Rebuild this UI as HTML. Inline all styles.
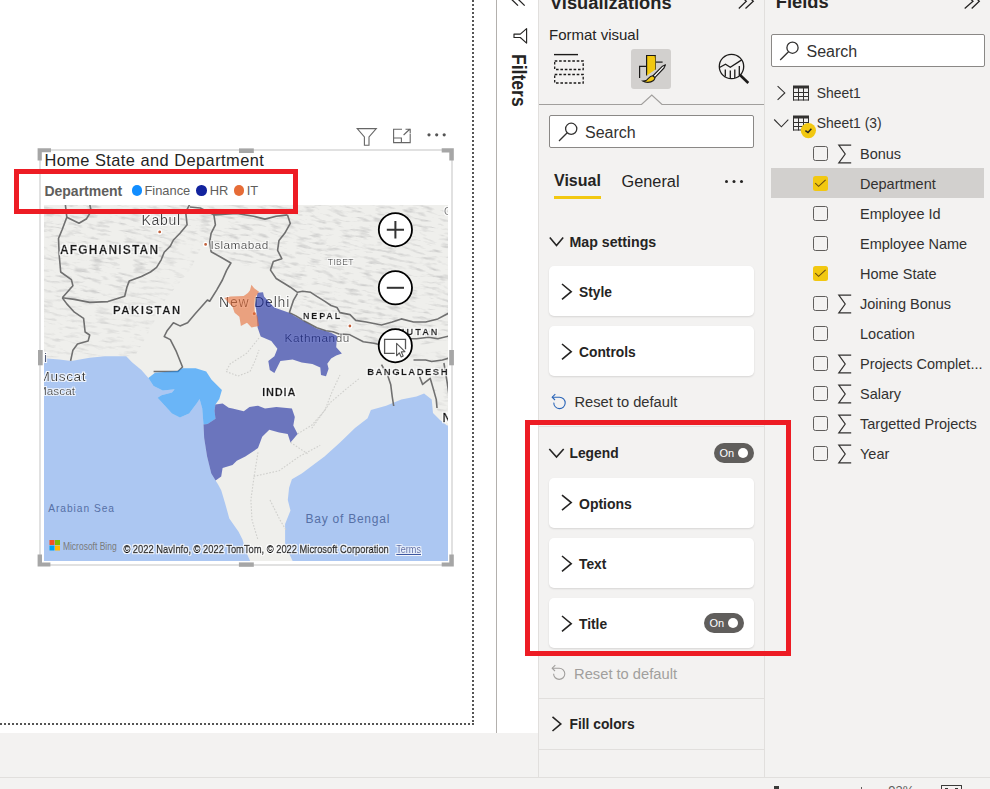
<!DOCTYPE html>
<html><head><meta charset="utf-8">
<style>
*{margin:0;padding:0;box-sizing:border-box}
html,body{width:990px;height:789px;overflow:hidden;background:#fff;font-family:"Liberation Sans",sans-serif;color:#252423}
.a{position:absolute}
.t{position:absolute;white-space:nowrap;line-height:1}
.card{position:absolute;left:549px;width:205px;height:50px;background:#fff;border-radius:5px;box-shadow:0 1px 2px rgba(0,0,0,0.12)}
.chev{position:absolute}
.cb{position:absolute;left:813px;width:15px;height:15px;border:1px solid #605e5c;border-radius:2px;background:#fff}
.fl{position:absolute;left:860px;font-size:14.5px;color:#323130;white-space:nowrap;line-height:1}
.sig{position:absolute;left:838px}
</style></head><body>

<!-- canvas area -->
<div class="a" style="left:0;top:0;width:496px;height:733px;background:#fff"></div>
<!-- dotted page border -->
<div class="a" style="left:0;top:723px;width:474px;height:2px;background-image:linear-gradient(90deg,#555 50%,transparent 50%);background-size:4px 2px"></div>
<div class="a" style="left:472px;top:0;width:2px;height:725px;background-image:linear-gradient(180deg,#555 50%,transparent 50%);background-size:2px 4px"></div>
<!-- bottom grey -->
<div class="a" style="left:0;top:733px;width:990px;height:56px;background:#f3f2f1"></div>
<div class="a" style="left:0;top:777px;width:990px;height:1px;background:#e1dfdd"></div>

<!-- VISUAL START -->
<svg class="a" style="left:350px;top:122px" width="105" height="30" viewBox="350 122 105 30">
 <path d="M357.2,128.6 H376.3 L369,137 V145.3 H364.4 V137 Z" fill="none" stroke="#666" stroke-width="1.1" stroke-linejoin="miter"/>
 <path d="M402,129.2 H393.6 V142.6 H410.2 V134" fill="none" stroke="#666" stroke-width="1.1"/>
 <path d="M393.6,138 H401.4 V142.6" fill="none" stroke="#666" stroke-width="1.1"/>
 <path d="M403.6,135 L410,129 M405.5,129.2 H410.2 V133.6" fill="none" stroke="#666" stroke-width="1.1"/>
 <circle cx="429" cy="134.8" r="1.6" fill="#555"/><circle cx="436.7" cy="134.8" r="1.6" fill="#555"/><circle cx="444.2" cy="134.8" r="1.6" fill="#555"/>
</svg>
<div class="a" style="left:38.8px;top:149px;width:414.4px;height:417px;border:2px solid #e1e1e1"></div>
<svg class="a" style="left:36px;top:146px" width="420" height="424" viewBox="36 146 420 424">
 <g fill="#a6a6a6">
  <path d="M37.6,148.3 H51 V152.3 H41.8 V160.6 H37.6 Z"/>
  <path d="M441.7,148.3 H453.8 V160.6 H449.3 V152.6 H441.7 Z"/>
  <path d="M37.6,554.4 H42 V562.4 H50.4 V566.6 H37.6 Z"/>
  <path d="M449.3,554.4 H453.8 V566.6 H441.7 V562.4 H449.3 Z"/>
  <rect x="239" y="148.4" width="14.8" height="4.6"/>
  <rect x="238.9" y="562.4" width="14.9" height="4.4"/>
  <rect x="38" y="350" width="4.7" height="15.3"/>
  <rect x="449.2" y="350" width="4.7" height="15.3"/>
 </g>
</svg>
<div class="t" style="left:44.4px;top:151.6px;font-size:16.4px;color:#252423;letter-spacing:0.45px">Home State and Department</div>
<div class="t" style="left:44.4px;top:184.1px;font-size:14px;font-weight:bold;color:#605e5c">Department</div>
<div class="a" style="left:131.7px;top:185.2px;width:10.5px;height:10.5px;border-radius:50%;background:#118dff"></div>
<div class="t" style="left:144.4px;top:185px;font-size:12.9px;color:#605e5c">Finance</div>
<div class="a" style="left:196.4px;top:185.2px;width:10.5px;height:10.5px;border-radius:50%;background:#12239e"></div>
<div class="t" style="left:209.8px;top:185px;font-size:12.9px;color:#605e5c">HR</div>
<div class="a" style="left:233.6px;top:185.2px;width:10.5px;height:10.5px;border-radius:50%;background:#e66c37"></div>
<div class="t" style="left:246.7px;top:185px;font-size:12.9px;color:#605e5c">IT</div>
<svg class="a" style="left:44px;top:205px" width="404" height="356" viewBox="44 205 404 356">
<defs><filter id="hs" x="0" y="0" width="1" height="1" filterUnits="objectBoundingBox"><feTurbulence type="fractalNoise" baseFrequency="0.07 0.32" numOctaves="3" seed="11"/><feColorMatrix values="0 0 0 0 0.5  0 0 0 0 0.5  0 0 0 0 0.5  3.2 0 0 0 -1.6"/></filter>
<filter id="halo"><feMorphology operator="dilate" radius="1" in="SourceAlpha" result="d"/><feFlood flood-color="#fff" flood-opacity="0.85"/><feComposite in2="d" operator="in" result="w"/><feMerge><feMergeNode in="w"/><feMergeNode in="SourceGraphic"/></feMerge></filter></defs>
<rect x="44" y="205" width="404" height="356" fill="#efefec"/>
<clipPath id="c1"><path d="M44.0,205.0 L449.0,205.0 L449.0,313.0 L437.8,318.9 L401.3,318.9 L381.5,325.0 L355.7,320.4 L345.0,314.3 L325.2,302.2 L304.5,289.9 L287.5,285.6 L270.5,270.1 L230.9,263.0 L211.1,251.7 L209.7,241.8 L190.0,232.0 L173.0,246.0 L160.0,262.0 L141.0,276.5 L125.0,296.0 L90.0,302.0 L62.0,298.0 L44.0,290.0 Z"/><path d="M298.8,292.7 L345.0,314.3 L381.5,325.0 L401.3,318.9 L449.0,313.0 L449.0,340.0 L420.0,345.0 L380.0,344.8 L337.0,331.0 L303.0,318.0 L292.0,305.0 Z"/></clipPath>
<clipPath id="c2"><path d="M44.0,290.0 L62.0,298.0 L90.0,302.0 L125.0,296.0 L141.0,276.5 L160.0,262.0 L173.0,246.0 L190.0,232.0 L205.0,240.0 L190.0,270.0 L165.0,300.0 L150.0,330.0 L135.0,356.0 L44.0,357.8 Z"/><path d="M405.0,355.0 L449.0,350.0 L449.0,420.0 L437.0,410.0 L430.0,378.0 L420.0,372.0 Z"/></clipPath>
<g clip-path="url(#c1)" opacity="0.62"><rect x="-100" y="100" width="700" height="600" filter="url(#hs)" transform="rotate(10 246 383)"/></g>
<g clip-path="url(#c2)" opacity="0.42"><rect x="-100" y="100" width="700" height="600" filter="url(#hs)" transform="rotate(10 246 383)"/></g>
<path d="M40.0,357.8 L59.2,359.4 L71.4,360.9 L89.7,357.8 L104.9,356.3 L126.2,356.3 L132.3,362.4 L141.4,370.0 L148.4,378.1 L153.6,386.0 L162.8,390.6 L174.6,389.2 L172.0,392.5 L161.5,395.2 L157.6,397.8 L172.0,413.5 L179.9,417.5 L189.1,413.5 L197.0,403.0 L199.6,399.1 L202.2,408.3 L203.5,424.5 L204.2,438.2 L207.1,456.6 L211.3,473.5 L215.6,480.6 L218.4,484.9 L221.3,490.6 L225.3,503.9 L229.3,518.5 L238.6,531.8 L242.6,539.8 L246.6,553.1 L250.6,562.0 L40.0,562.0 Z" fill="#acc7f2"/>
<path d="M293.1,562.0 L285.1,545.0 L285.1,523.9 L290.5,510.6 L287.8,500.0 L289.1,487.7 L291.9,479.2 L301.8,473.5 L313.1,465.1 L324.5,456.6 L340.0,442.4 L355.0,428.0 L367.6,418.2 L370.9,410.0 L386.1,405.7 L401.3,399.6 L416.5,396.5 L424.1,393.5 L431.7,399.6 L433.0,413.0 L440.0,420.0 L447.0,425.4 L450.0,426.0 L450.0,562.0 Z" fill="#acc7f2"/>
<g fill="none" stroke="#707070" stroke-width="1.6" stroke-linejoin="round">
<path d="M66.8,217.2 L79.0,223.3 L86.6,218.7 L91.2,211.1 L89.7,204.0"/>
<path d="M65.3,204.0 L66.8,217.2 L62.3,229.3 L58.5,238.5 L59.2,255.2 L60.7,272.0 L71.4,279.6 L72.9,285.7 L62.3,297.8"/>
<path d="M62.3,297.8 L74.4,299.4 L89.7,302.4 L107.9,301.6 L124.7,296.3 L126.9,287.2 L129.2,281.1 L141.4,276.5 L150.5,272.0 L156.6,267.4 L161.2,259.8 L164.2,252.2 L170.3,246.1 L173.4,240.0 L180.0,233.3 L187.1,224.8 L185.7,212.1 L189.9,204.0"/>
<path d="M62.3,297.8 L66.8,303.9 L74.4,312.2 L83.6,318.3 L85.1,332.0 L89.7,335.0 L88.1,341.1 L77.5,344.1 L72.9,350.2 L70.6,360.9"/>
<path d="M213.9,214.9 L215.4,224.8 L211.1,233.3 L209.7,241.8 L211.1,251.7 L221.0,257.3 L230.9,263.0 L226.7,270.1 L222.4,280.0 L216.8,289.9 L209.7,301.2 L207.4,300.0 L195.2,313.7 L187.6,322.8 L180.0,325.9 L173.4,322.8 L167.3,330.4 L164.2,336.5 L170.3,339.6 L176.4,351.7 L182.5,367.0 L177.9,371.5 L153.6,371.5"/>
<path d="M189.9,207.0 L200.3,208.0 L213.9,214.9 L236.6,213.5 L253.5,216.3 L264.9,219.1 L276.2,216.3 L287.5,214.9"/>
<path d="M287.5,214.9 L290.3,223.4 L284.7,233.3 L279.0,240.4 L277.6,250.3 L281.8,258.7 L273.3,261.6 L270.5,270.1 L276.2,278.5 L282.3,282.2 L290.4,287.2 L297.5,292.3 L302.6,291.3 L310.7,292.3 L316.8,296.4 L324.9,301.4 L331.0,305.5 L337.0,307.5 L340.0,312.6 L350.0,314.6 L355.7,320.4 L366.3,322.0 L381.5,325.0 L392.2,322.0 L401.3,318.9 L413.5,322.0 L425.7,322.0 L437.8,318.9 L449.0,313.0"/>
<path d="M297.5,293.3 L293.4,300.4 L291.4,306.5 L289.4,312.6 L295.5,315.6 L305.6,321.7 L316.8,327.8 L325.9,330.8 L333.0,331.8 L339.0,333.9 L350.0,334.9 L363.3,341.7 L373.9,343.3 L380.0,344.8"/>
<path d="M404.4,338.7 L416.5,338.7 L428.7,337.2 L437.8,338.7 L449.0,336.0"/>
<path d="M413.5,360.0 L425.7,360.0 L431.7,361.5 L442.4,360.0 L449.0,358.0"/>
<path d="M381.5,364.6 L387.6,375.2 L390.7,384.4 L392.2,396.5 L393.7,406.0"/>
<path d="M419.6,376.7 L422.6,384.4 L430.2,378.3 L433.3,388.9 L436.3,399.6 L437.0,408.0"/>
<path d="M443.9,363.0 L447.0,381.3 L449.0,395.0"/>
</g>
<g fill="none" stroke="#cfcfcc" stroke-width="1.1" stroke-dasharray="1.6 1.6">
<path d="M258.0,452.3 L253.7,479.2 L250.9,500.0 L252.0,520.0 L258.0,540.0"/>
<path d="M253.7,476.4 L279.2,470.7 L299.0,456.6 L320.2,445.3"/>
<path d="M290.5,442.4 L307.5,453.7"/>
<path d="M311.7,428.3 L330.1,402.8 L345.0,390.0 L360.0,378.0"/>
<path d="M259.0,338.0 L247.0,353.0 L230.0,364.0 L226.0,371.5 L238.0,376.0 L250.0,371.5 L255.0,361.0 L259.0,350.0"/>
<path d="M297.6,433.9 L312.0,425.0 L325.0,410.0 L332.0,392.0 L340.0,375.0"/>
<path d="M270.0,500.0 L280.0,520.0 L286.0,530.0"/>
</g>
<g fill="#c0603a" stroke="#fff" stroke-width="1.2"><circle cx="159.7" cy="231.9" r="2"/><circle cx="205.6" cy="244.4" r="2"/><circle cx="254.2" cy="313.7" r="2"/><circle cx="349.9" cy="326" r="2"/></g>
<text x="141.5" y="224.6" textLength="38.7" lengthAdjust="spacing" style="font-family:'Liberation Sans',sans-serif;font-size:14px;" fill="#404040" filter="url(#halo)">Kabul</text>
<text x="60" y="254" textLength="98.1" lengthAdjust="spacing" style="font-family:'Liberation Sans',sans-serif;font-size:12px;font-weight:bold;stroke:#1a1a1a;stroke-width:0.35px;" fill="#1a1a1a" filter="url(#halo)">AFGHANISTAN</text>
<text x="210.6" y="248.5" textLength="57.6" lengthAdjust="spacing" style="font-family:'Liberation Sans',sans-serif;font-size:11.8px;" fill="#404040" filter="url(#halo)">Islamabad</text>
<text x="327.8" y="265" textLength="25.7" lengthAdjust="spacing" style="font-family:'Liberation Sans',sans-serif;font-size:8.6px;" fill="#555" filter="url(#halo)">TIBET</text>
<text x="113" y="313.5" textLength="67.2" lengthAdjust="spacing" style="font-family:'Liberation Sans',sans-serif;font-size:11.4px;font-weight:bold;stroke:#1a1a1a;stroke-width:0.35px;" fill="#1a1a1a" filter="url(#halo)">PAKISTAN</text>
<text x="219" y="307.2" textLength="70.3" lengthAdjust="spacing" style="font-family:'Liberation Sans',sans-serif;font-size:14px;" fill="#454545" filter="url(#halo)">New Delhi</text>
<text x="303" y="318.7" textLength="37.2" lengthAdjust="spacing" style="font-family:'Liberation Sans',sans-serif;font-size:9px;font-weight:bold;stroke:#1a1a1a;stroke-width:0.35px;" fill="#1a1a1a" filter="url(#halo)">NEPAL</text>
<text x="284.5" y="341.8" textLength="64.9" lengthAdjust="spacing" style="font-family:'Liberation Sans',sans-serif;font-size:11.8px;" fill="#454545" filter="url(#halo)">Kathmandu</text>
<text x="389" y="335.2" textLength="48.5" lengthAdjust="spacing" style="font-family:'Liberation Sans',sans-serif;font-size:9.2px;font-weight:bold;stroke:#1a1a1a;stroke-width:0.35px;" fill="#1a1a1a" filter="url(#halo)">BHUTAN</text>
<text x="367.2" y="375.1" textLength="80.3" lengthAdjust="spacing" style="font-family:'Liberation Sans',sans-serif;font-size:9.5px;font-weight:bold;stroke:#1a1a1a;stroke-width:0.35px;" fill="#1a1a1a" filter="url(#halo)">BANGLADESH</text>
<text x="262.2" y="396" textLength="33.2" lengthAdjust="spacing" style="font-family:'Liberation Sans',sans-serif;font-size:11px;font-weight:bold;stroke:#1a1a1a;stroke-width:0.35px;" fill="#1a1a1a" filter="url(#halo)">INDIA</text>
<text x="38.5" y="381.4" textLength="47.1" lengthAdjust="spacing" style="font-family:'Liberation Sans',sans-serif;font-size:13.6px;" fill="#3a3a3a" filter="url(#halo)">Muscat</text>
<text x="37" y="394.7" textLength="38" lengthAdjust="spacingAndGlyphs" style="font-family:'Liberation Sans',sans-serif;font-size:11.8px;" fill="#3a3a3a" filter="url(#halo)">Mascat</text>
<text x="44.3" y="362.3" style="font-family:'Liberation Sans',sans-serif;font-size:12px;" fill="#3d4a6a" filter="url(#halo)">i</text>
<text x="442.5" y="422" style="font-family:'Liberation Sans',sans-serif;font-size:12px;font-weight:bold;stroke:#1a1a1a;stroke-width:0.35px;" fill="#1a1a1a" filter="url(#halo)">N</text>
<text x="444" y="215" style="font-family:'Liberation Sans',sans-serif;font-size:10px;" fill="#666" filter="url(#halo)">C</text>
<text x="48.2" y="512.2" textLength="65.8" lengthAdjust="spacing" style="font-family:'Liberation Sans',sans-serif;font-size:10.2px;" fill="#5670a6">Arabian Sea</text>
<text x="305.5" y="523" textLength="83.8" lengthAdjust="spacing" style="font-family:'Liberation Sans',sans-serif;font-size:12px;" fill="#5670a6">Bay of Bengal</text>
<g fill-opacity="0.6">
<path d="M148.4,378.1 L155.0,372.8 L177.3,370.9 L182.5,368.2 L195.7,368.2 L206.2,371.5 L211.4,379.4 L221.9,389.9 L219.3,399.1 L215.4,404.5 L214.5,410.7 L215.5,418.8 L207.5,424.0 L203.5,424.5 L202.2,408.3 L199.6,399.1 L197.0,403.0 L189.1,413.5 L179.9,417.5 L172.0,413.5 L157.6,397.8 L161.5,395.2 L172.0,392.5 L174.6,389.2 L162.8,390.6 L153.6,386.0 Z" fill="#118dff"/>
<path d="M215.4,404.5 L222.6,403.6 L228.7,407.7 L232.5,408.5 L243.8,411.3 L249.5,407.1 L258.0,405.7 L265.0,408.5 L276.4,407.1 L291.9,408.5 L294.8,417.0 L293.3,425.5 L297.6,433.9 L290.5,442.4 L287.7,433.9 L279.2,432.5 L269.3,429.7 L262.2,436.8 L258.0,448.1 L245.3,456.6 L236.8,460.8 L232.5,465.1 L222.6,467.9 L221.2,476.4 L215.6,480.6 L211.3,473.5 L207.1,456.6 L204.2,438.2 L203.5,424.5 L207.5,424.0 L215.5,418.8 L214.5,410.7 Z" fill="#12239e"/>
<path d="M257.6,292.7 L263.0,292.3 L264.0,296.5 L274.2,307.5 L288.4,312.6 L302.6,320.7 L316.8,328.8 L331.0,332.8 L337.0,335.9 L336.2,347.2 L341.9,353.5 L336.2,355.4 L331.1,358.6 L327.3,363.7 L328.6,368.7 L326.0,376.3 L321.0,375.0 L320.3,367.5 L312.4,363.9 L301.7,362.4 L292.6,359.4 L280.4,360.9 L274.4,373.0 L269.8,370.0 L268.3,360.9 L274.4,356.3 L277.4,348.7 L271.3,341.1 L260.7,336.5 L257.6,327.4 L256.1,309.1 L255.0,305.3 Z" fill="#12239e"/>
<path d="M251.4,284.8 L254.2,288.2 L259.0,291.7 L254.9,298.0 L254.6,304.3 L254.6,310.7 L257.6,316.7 L259.1,325.9 L251.5,327.4 L247.0,322.8 L240.9,325.9 L239.4,316.7 L234.6,312.7 L232.6,307.1 L224.2,298.0 L230.5,296.6 L243.7,295.9 L247.9,293.1 L250.0,290.3 Z" fill="#e66c37"/>
</g>
<g stroke="#000" stroke-width="1.8" fill="#fff"><circle cx="395.4" cy="229.7" r="16.6"/><circle cx="395.4" cy="287.8" r="16.6"/><circle cx="395.3" cy="345.7" r="16.6"/></g>
<g stroke="#333" stroke-width="2" fill="none"><path d="M386.8,229.7 H404 M395.4,221 V238.4"/><path d="M386.8,287.8 H404"/></g>
<path d="M394.7,353.3 H384.6 V339.3 H405.5 V349.2" fill="none" stroke="#555" stroke-width="1.3"/>
<path d="M396.6,343.4 V355.8 L399.3,352.8 L401.2,357 L403.2,356 L401.3,351.9 L404.9,351.7 Z" fill="#fff" stroke="#555" stroke-width="1.1" stroke-linejoin="round"/>
<rect x="49.5" y="540" width="5" height="5" fill="#f25022"/><rect x="55" y="540" width="5" height="5" fill="#7fba00"/><rect x="49.5" y="545.5" width="5" height="5" fill="#00a4ef"/><rect x="55" y="545.5" width="5" height="5" fill="#ffb900"/>
<text x="62.9" y="549.5" textLength="53.8" lengthAdjust="spacingAndGlyphs" style="font-family:'Liberation Sans',sans-serif;font-size:10px;" fill="#7a7a7a">Microsoft Bing</text>
<text x="123.4" y="552.9" textLength="265.4" lengthAdjust="spacingAndGlyphs" style="font-family:'Liberation Sans',sans-serif;font-size:11px;stroke:#000;stroke-width:0.5px;" fill="#000" filter="url(#halo)">© 2022 NavInfo, © 2022 TomTom, © 2022 Microsoft Corporation</text>
<text x="396.2" y="552.9" textLength="24.8" lengthAdjust="spacingAndGlyphs" style="font-family:'Liberation Sans',sans-serif;font-size:11px;text-decoration:underline" fill="#3a56a0" filter="url(#halo)">Terms</text>
</svg>
<!-- VISUAL END -->
<!-- filters strip -->
<div class="a" style="left:496px;top:0;width:1px;height:733px;background:#b3b0ad"></div>

<!-- viz panel -->
<div class="a" style="left:538px;top:0;width:227px;height:777px;background:#f3f2f1;border-left:1px solid #e1dfdd;border-right:1px solid #e1dfdd"></div>
<!-- fields panel -->
<div class="a" style="left:765px;top:0;width:225px;height:777px;background:#f3f2f1"></div>


<!-- VIZ PANEL CONTENT -->
<div class="t" style="left:550px;top:-6px;font-size:18.3px;font-weight:bold;color:#252423">Visualizations</div>
<svg class="a" style="left:736px;top:0" width="20" height="12" viewBox="0 0 20 12"><path d="M2.8,8.5 L10.3,1.3 L3.5,-5.5 M9.5,8.5 L17.3,1.3 L10.5,-5.5" fill="none" stroke="#252423" stroke-width="1.3"/></svg>
<div class="t" style="left:549px;top:27.3px;font-size:15px;color:#252423">Format visual</div>
<!-- build icon -->
<svg class="a" style="left:550px;top:50px" width="40" height="40" viewBox="550 50 40 40">
 <line x1="554" y1="54.6" x2="578" y2="54.6" stroke="#1b1a19" stroke-width="1.4"/>
 <rect x="554.7" y="61" width="28.5" height="8.5" fill="none" stroke="#1b1a19" stroke-width="1.3" stroke-dasharray="2.6 1.8"/>
 <rect x="554.7" y="74.5" width="28.5" height="8.5" fill="none" stroke="#1b1a19" stroke-width="1.3" stroke-dasharray="2.6 1.8"/>
</svg>
<!-- format icon active -->
<div class="a" style="left:631px;top:49px;width:40px;height:40px;background:#d2d0ce;border-radius:3px"></div>
<svg class="a" style="left:631px;top:49px" width="40" height="40" viewBox="631 49 40 40">
 <path d="M639.6,78.1 V66.3 H646.6" fill="none" stroke="#1b1a19" stroke-width="1.2"/>
 <path d="M655.3,62.1 H662.6" fill="none" stroke="#1b1a19" stroke-width="1.2"/>
 <path d="M646.6,75.5 V55.5 H655.3 V69.5" fill="#f2c811" stroke="#1b1a19" stroke-width="1.2"/>
 <path d="M646.6,75.5 L655.3,69 L655.3,55.5" fill="#f2c811"/>
 <path d="M665.5,64.8 L664,68 L654.8,77.6 L652.8,76 L662.5,66.2 Z" fill="#fff" stroke="#1b1a19" stroke-width="1.1" stroke-linejoin="round"/>
 <path d="M652.6,75.8 C650,76 648.5,78.5 646.5,80.2 C645,81 643.5,81 642.8,81 C645,82.6 650,83.2 653.5,80.5 C655,79 655,77.5 654.8,77.5 Z" fill="#f2c811" stroke="#1b1a19" stroke-width="1.1"/>
</svg>
<!-- analytics icon -->
<svg class="a" style="left:715px;top:50px" width="40" height="40" viewBox="715 50 40 40">
 <circle cx="731.5" cy="66.5" r="12.2" fill="none" stroke="#1b1a19" stroke-width="1.3"/>
 <path d="M719.5,67.5 L725.5,64.3 L730.3,67.2 L741.7,59.9" fill="none" stroke="#1b1a19" stroke-width="1.3"/>
 <path d="M725.3,69.5 V76.5 M730.3,70.5 V78.3 M734.8,69.5 V78 M739.3,66 V75.5" fill="none" stroke="#1b1a19" stroke-width="1.3"/>
 <path d="M739.8,74.8 L748.3,83" stroke="#1b1a19" stroke-width="2.6"/>
</svg>
<!-- divider with notch -->
<svg class="a" style="left:538px;top:92px" width="227" height="14" viewBox="538 92 227 14">
 <path d="M539,104.5 H641.5 L651.8,95 L662,104.5 H764" fill="none" stroke="#a19f9d" stroke-width="1.2"/>
</svg>
<!-- search -->
<div class="a" style="left:549px;top:115px;width:205px;height:33px;background:#fff;border:1px solid #8a8886;border-radius:2px"></div>
<svg class="a" style="left:556px;top:121px" width="24" height="22" viewBox="556 121 24 22">
 <circle cx="571.2" cy="128.8" r="5.6" fill="none" stroke="#323130" stroke-width="1.3"/>
 <path d="M567.2,132.8 L559,141" stroke="#323130" stroke-width="1.3"/>
</svg>
<div class="t" style="left:585px;top:125.3px;font-size:16px;color:#323130">Search</div>
<!-- tabs -->
<div class="t" style="left:554px;top:173px;font-size:16px;font-weight:bold;color:#252423">Visual</div>
<div class="a" style="left:554px;top:196px;width:47px;height:3px;background:#f2c811"></div>
<div class="t" style="left:621.6px;top:172.7px;font-size:16.3px;color:#252423">General</div>
<div class="a" style="left:725px;top:180px;width:3px;height:3px;border-radius:50%;background:#252423;box-shadow:7.5px 0 0 #252423,15px 0 0 #252423"></div>
<!-- map settings -->
<svg class="a" style="left:547px;top:234px" width="20" height="16" viewBox="547 234 20 16"><path d="M549.8,237.5 L556.5,245.5 L563.2,237.5" fill="none" stroke="#252423" stroke-width="1.6"/></svg>
<div class="t" style="left:569.5px;top:234.7px;font-size:14.2px;font-weight:bold;color:#252423">Map settings</div>
<!-- cards -->
<div class="card" style="top:266px"></div>
<svg class="chev a" style="left:558px;top:282px" width="16" height="20" viewBox="558 282 16 20"><path d="M562,284 L571.2,291.7 L562,299.4" fill="none" stroke="#252423" stroke-width="1.6"/></svg>
<div class="t" style="left:579px;top:286.3px;font-size:13.8px;font-weight:bold;color:#252423">Style</div>
<div class="card" style="top:326px"></div>
<svg class="chev a" style="left:558px;top:342px" width="16" height="20" viewBox="558 342 16 20"><path d="M562,344 L571.2,351.7 L562,359.4" fill="none" stroke="#252423" stroke-width="1.6"/></svg>
<div class="t" style="left:579px;top:346.3px;font-size:13.8px;font-weight:bold;color:#252423">Controls</div>
<!-- reset -->
<svg class="a" style="left:548px;top:390px" width="22" height="22" viewBox="548 390 22 22">
 <path d="M552.3,397.2 H559.5 A5.7,5.7 0 1 1 553.8,402.6" fill="none" stroke="#2a65b8" stroke-width="1.1"/>
 <path d="M555.3,394.2 L552.2,397.2 L555,400" fill="none" stroke="#2a65b8" stroke-width="1.1"/>
</svg>
<div class="t" style="left:574.4px;top:394.6px;font-size:14.7px;color:#323130">Reset to default</div>
<div class="a" style="left:538px;top:426px;width:226px;height:1px;background:#e1dfdd"></div>
<!-- legend -->
<svg class="a" style="left:547px;top:446px" width="20" height="14" viewBox="547 446 20 14"><path d="M549.3,449 L556.5,457 L563.7,449" fill="none" stroke="#252423" stroke-width="1.6"/></svg>
<div class="t" style="left:569.5px;top:447.3px;font-size:13.8px;font-weight:bold;color:#252423">Legend</div>
<div class="a" style="left:714px;top:443px;width:40px;height:20px;border-radius:10px;background:#605e5c"></div>
<div class="t" style="left:719.5px;top:448px;font-size:11px;color:#fff">On</div>
<div class="a" style="left:737.5px;top:447.7px;width:10.6px;height:10.6px;border-radius:50%;background:#fff"></div>
<div class="card" style="top:478px"></div>
<svg class="chev a" style="left:558px;top:494px" width="16" height="20" viewBox="558 494 16 20"><path d="M562,495.1 L571.2,502.6 L562,510.1" fill="none" stroke="#252423" stroke-width="1.6"/></svg>
<div class="t" style="left:579px;top:497.4px;font-size:14px;font-weight:bold;color:#252423">Options</div>
<div class="card" style="top:538px"></div>
<svg class="chev a" style="left:558px;top:554px" width="16" height="20" viewBox="558 554 16 20"><path d="M562,556 L571.2,563.7 L562,571.4" fill="none" stroke="#252423" stroke-width="1.6"/></svg>
<div class="t" style="left:579px;top:558.3px;font-size:13.8px;font-weight:bold;color:#252423">Text</div>
<div class="card" style="top:598px"></div>
<svg class="chev a" style="left:558px;top:614px" width="16" height="20" viewBox="558 614 16 20"><path d="M562,616 L571.2,623.7 L562,631.4" fill="none" stroke="#252423" stroke-width="1.6"/></svg>
<div class="t" style="left:579px;top:618.3px;font-size:13.8px;font-weight:bold;color:#252423">Title</div>
<div class="a" style="left:704px;top:613px;width:40px;height:20px;border-radius:10px;background:#605e5c"></div>
<div class="t" style="left:709.5px;top:618px;font-size:11px;color:#fff">On</div>
<div class="a" style="left:727.5px;top:617.7px;width:10.6px;height:10.6px;border-radius:50%;background:#fff"></div>
<!-- reset disabled -->
<svg class="a" style="left:548px;top:663px" width="22" height="22" viewBox="548 663 22 22">
 <path d="M552.3,668.2 H559.2 A5.6,5.6 0 1 1 553.6,673.8" fill="none" stroke="#a19f9d" stroke-width="1.1"/>
 <path d="M555.3,665.2 L552.2,668.2 L555,671" fill="none" stroke="#a19f9d" stroke-width="1.1"/>
</svg>
<div class="t" style="left:574.1px;top:667.3px;font-size:14.7px;color:#a19f9d">Reset to default</div>
<div class="a" style="left:538px;top:698px;width:226px;height:1px;background:#e1dfdd"></div>
<svg class="chev a" style="left:549px;top:714px" width="16" height="20" viewBox="549 714 16 20"><path d="M552.5,716.8 L560.8,723.9 L552.5,731" fill="none" stroke="#252423" stroke-width="1.6"/></svg>
<div class="t" style="left:569.5px;top:717.5px;font-size:13.8px;font-weight:bold;color:#252423">Fill colors</div>
<div class="a" style="left:538px;top:749px;width:226px;height:1px;background:#e1dfdd"></div>


<!-- FILTERS STRIP -->
<svg class="a" style="left:508px;top:0" width="20" height="10" viewBox="508 0 20 10"><path d="M518,5.6 L511.5,-0.7 L518,-7 M524.7,5.6 L518.2,-0.7 L524.7,-7" fill="none" stroke="#252423" stroke-width="1.3"/></svg>
<svg class="a" style="left:510px;top:26px" width="20" height="20" viewBox="510 26 20 20"><path d="M526.6,28.6 V43.1 L520.3,37.5 H514 V34.1 H520.3 Z" fill="none" stroke="#252423" stroke-width="1.15" stroke-linejoin="round"/></svg>
<div class="t" style="left:528.2px;top:53.8px;font-size:19.5px;font-weight:bold;color:#252423;transform:rotate(90deg) scaleX(0.9);transform-origin:0 0">Filters</div>

<!-- FIELDS PANEL -->
<div class="t" style="left:775.8px;top:-6.7px;font-size:18.3px;font-weight:bold;color:#252423">Fields</div>
<svg class="a" style="left:960px;top:0" width="24" height="12" viewBox="960 0 24 12"><path d="M964.7,8.5 L973,1.3 L966,-5.5 M971.7,8.5 L979.3,1.3 L972.5,-5.5" fill="none" stroke="#252423" stroke-width="1.3"/></svg>
<div class="a" style="left:770.5px;top:34.4px;width:214.2px;height:32.3px;background:#fff;border:1px solid #8a8886;border-radius:2px"></div>
<svg class="a" style="left:777px;top:40px" width="24" height="22" viewBox="777 40 24 22">
 <circle cx="792.5" cy="47.7" r="5.6" fill="none" stroke="#323130" stroke-width="1.3"/>
 <path d="M788.5,51.7 L780.2,60" stroke="#323130" stroke-width="1.3"/>
</svg>
<div class="t" style="left:806.5px;top:44.1px;font-size:16px;color:#323130">Search</div>
<svg class="a" style="left:772px;top:84px" width="50" height="60" viewBox="772 84 50 60">
 <path d="M777.6,86.1 L784.8,92.9 L777.6,99.9" fill="none" stroke="#323130" stroke-width="1.1"/>
 <path d="M774.2,119.5 L781.4,126.8 L788.3,119.7" fill="none" stroke="#323130" stroke-width="1.1"/>
 <g fill="none" stroke="#323130" stroke-width="1">
  <path d="M793.5,86 V100.5 M798.5,88 V100.5 M803.5,88 V100.5 M808.5,86 V100.5 M793,92.5 H809 M793,96.5 H809 M793,100 H809"/>
  <path d="M793.5,116 V130.5 M798.5,118 V130.5 M803.5,118 V130.5 M808.5,116 V130.5 M793,122.5 H809 M793,126.5 H809 M793,130 H809"/>
 </g>
 <rect x="793" y="85.5" width="16" height="3" fill="#323130"/>
 <rect x="793" y="115.5" width="16" height="3" fill="#323130"/>
 <circle cx="808.4" cy="130.6" r="7.6" fill="#f2c811"/>
 <path d="M805.4,130.6 L808,132.5 L811.4,128.7" fill="none" stroke="#252423" stroke-width="1.5"/>
</svg>
<div class="t" style="left:816.8px;top:87.4px;font-size:13.9px;color:#323130">Sheet1</div>
<div class="t" style="left:816.8px;top:117.2px;font-size:13.9px;color:#323130">Sheet1 (3)</div>
<div class="a" style="left:771px;top:168px;width:213px;height:30px;background:#d2d0ce"></div>

<div class="cb" style="top:146.2px;width:14.7px;height:14.7px;border-radius:2.5px;background:transparent"></div>
<svg class="a" style="left:837px;top:143.5px" width="16" height="20" viewBox="0 0 16 20"><path d="M14.2,1.2 H1.8 L8.2,10 L1.8,18.8 H14.2" fill="none" stroke="#323130" stroke-width="1.2" stroke-linejoin="miter"/></svg>
<div class="fl" style="top:146.7px">Bonus</div>
<div class="a" style="left:813.2px;top:176.2px;width:14.7px;height:14.7px;background:#f2c811;border-radius:2.5px"></div>
<svg class="a" style="left:813px;top:175.5px" width="16" height="16" viewBox="0 0 16 16"><path d="M2.2,7.2 L5.6,10.3 L12.6,3.8" fill="none" stroke="#6b4e12" stroke-width="1.1"/></svg>
<div class="fl" style="top:176.7px">Department</div>
<div class="cb" style="top:206.2px;width:14.7px;height:14.7px;border-radius:2.5px;background:transparent"></div>
<div class="fl" style="top:206.7px">Employee Id</div>
<div class="cb" style="top:236.2px;width:14.7px;height:14.7px;border-radius:2.5px;background:transparent"></div>
<div class="fl" style="top:236.7px">Employee Name</div>
<div class="a" style="left:813.2px;top:266.2px;width:14.7px;height:14.7px;background:#f2c811;border-radius:2.5px"></div>
<svg class="a" style="left:813px;top:265.5px" width="16" height="16" viewBox="0 0 16 16"><path d="M2.2,7.2 L5.6,10.3 L12.6,3.8" fill="none" stroke="#6b4e12" stroke-width="1.1"/></svg>
<div class="fl" style="top:266.7px">Home State</div>
<div class="cb" style="top:296.2px;width:14.7px;height:14.7px;border-radius:2.5px;background:transparent"></div>
<svg class="a" style="left:837px;top:293.5px" width="16" height="20" viewBox="0 0 16 20"><path d="M14.2,1.2 H1.8 L8.2,10 L1.8,18.8 H14.2" fill="none" stroke="#323130" stroke-width="1.2" stroke-linejoin="miter"/></svg>
<div class="fl" style="top:296.7px">Joining Bonus</div>
<div class="cb" style="top:326.2px;width:14.7px;height:14.7px;border-radius:2.5px;background:transparent"></div>
<div class="fl" style="top:326.7px">Location</div>
<div class="cb" style="top:356.2px;width:14.7px;height:14.7px;border-radius:2.5px;background:transparent"></div>
<svg class="a" style="left:837px;top:353.5px" width="16" height="20" viewBox="0 0 16 20"><path d="M14.2,1.2 H1.8 L8.2,10 L1.8,18.8 H14.2" fill="none" stroke="#323130" stroke-width="1.2" stroke-linejoin="miter"/></svg>
<div class="fl" style="top:356.7px">Projects Complet...</div>
<div class="cb" style="top:386.2px;width:14.7px;height:14.7px;border-radius:2.5px;background:transparent"></div>
<svg class="a" style="left:837px;top:383.5px" width="16" height="20" viewBox="0 0 16 20"><path d="M14.2,1.2 H1.8 L8.2,10 L1.8,18.8 H14.2" fill="none" stroke="#323130" stroke-width="1.2" stroke-linejoin="miter"/></svg>
<div class="fl" style="top:386.7px">Salary</div>
<div class="cb" style="top:416.2px;width:14.7px;height:14.7px;border-radius:2.5px;background:transparent"></div>
<svg class="a" style="left:837px;top:413.5px" width="16" height="20" viewBox="0 0 16 20"><path d="M14.2,1.2 H1.8 L8.2,10 L1.8,18.8 H14.2" fill="none" stroke="#323130" stroke-width="1.2" stroke-linejoin="miter"/></svg>
<div class="fl" style="top:416.7px">Targetted Projects</div>
<div class="cb" style="top:446.2px;width:14.7px;height:14.7px;border-radius:2.5px;background:transparent"></div>
<svg class="a" style="left:837px;top:443.5px" width="16" height="20" viewBox="0 0 16 20"><path d="M14.2,1.2 H1.8 L8.2,10 L1.8,18.8 H14.2" fill="none" stroke="#323130" stroke-width="1.2" stroke-linejoin="miter"/></svg>
<div class="fl" style="top:446.7px">Year</div>


<!-- STATUS BAR -->
<div class="a" style="left:774px;top:785.6px;width:5.4px;height:4px;background:#3b3a39"></div>
<div class="a" style="left:861px;top:787px;width:1.2px;height:3px;background:#605e5c"></div>
<div class="t" style="left:888.3px;top:785px;font-size:13px;color:#605e5c;height:4px;overflow:hidden;line-height:13px"><div style="margin-top:-1px">93%</div></div>
<div class="a" style="left:940.6px;top:785.1px;width:21px;height:6px;border:1.6px solid #3b3a39;border-bottom:none;border-radius:1px"></div>
<div class="a" style="left:944.5px;top:788px;width:3px;height:2px;background:#3b3a39"></div>
<div class="a" style="left:955px;top:788px;width:3px;height:2px;background:#3b3a39"></div>
<!-- RED BOXES -->
<div class="a" style="left:14px;top:169px;width:283.5px;height:44.5px;border:5px solid #ed1c24"></div>
<div class="a" style="left:525px;top:420px;width:266px;height:236px;border:5px solid #ed1c24"></div>
</body></html>
